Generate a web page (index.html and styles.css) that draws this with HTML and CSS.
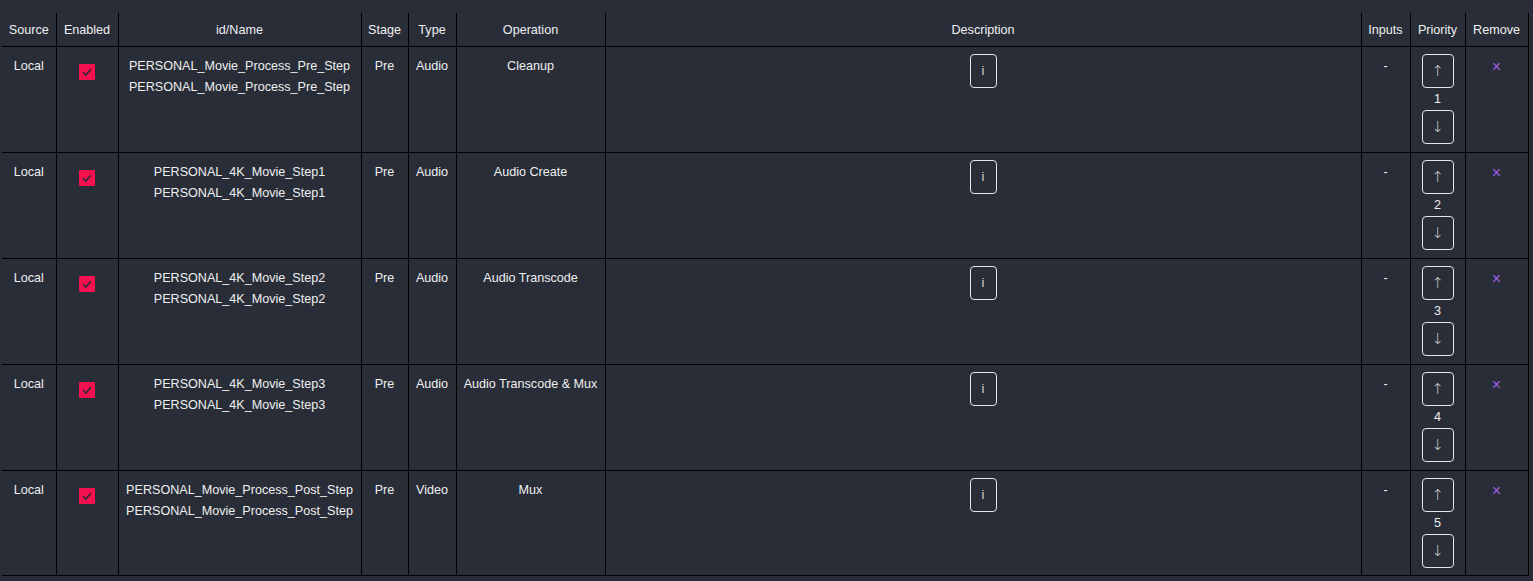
FILE: index.html
```html
<!DOCTYPE html>
<html>
<head>
<meta charset="utf-8">
<link rel="stylesheet" href="styles.css">
</head>
<body>
<div class="wrap">
<table class="grid">
<colgroup>
<col class="c-src"><col class="c-en"><col class="c-id"><col class="c-stage"><col class="c-type"><col class="c-op"><col class="c-desc"><col class="c-in"><col class="c-pri"><col class="c-rm">
</colgroup>
<thead>
<tr><th>Source</th><th>Enabled</th><th>id/Name</th><th>Stage</th><th>Type</th><th>Operation</th><th>Description</th><th>Inputs</th><th>Priority</th><th>Remove</th></tr>
</thead>
<tbody>
<tr>
<td class="t">Local</td>
<td><span class="chk"><svg width="16" height="16" viewBox="0 0 16 16"><path d="M4 8.2 L6.8 11 L12 5.2" fill="none" stroke="#2a2d38" stroke-width="1.6"/></svg></span></td>
<td class="t"><div class="ln">PERSONAL_Movie_Process_Pre_Step</div><div class="ln">PERSONAL_Movie_Process_Pre_Step</div></td>
<td class="t">Pre</td><td class="t">Audio</td><td class="t">Cleanup</td>
<td><button class="info">i</button></td>
<td class="t">-</td>
<td><button class="arr">↑</button><div class="num">1</div><button class="arr">↓</button></td>
<td><span class="rm">×</span></td>
</tr>
<tr>
<td class="t">Local</td>
<td><span class="chk"><svg width="16" height="16" viewBox="0 0 16 16"><path d="M4 8.2 L6.8 11 L12 5.2" fill="none" stroke="#2a2d38" stroke-width="1.6"/></svg></span></td>
<td class="t"><div class="ln">PERSONAL_4K_Movie_Step1</div><div class="ln">PERSONAL_4K_Movie_Step1</div></td>
<td class="t">Pre</td><td class="t">Audio</td><td class="t">Audio Create</td>
<td><button class="info">i</button></td>
<td class="t">-</td>
<td><button class="arr">↑</button><div class="num">2</div><button class="arr">↓</button></td>
<td><span class="rm">×</span></td>
</tr>
<tr>
<td class="t">Local</td>
<td><span class="chk"><svg width="16" height="16" viewBox="0 0 16 16"><path d="M4 8.2 L6.8 11 L12 5.2" fill="none" stroke="#2a2d38" stroke-width="1.6"/></svg></span></td>
<td class="t"><div class="ln">PERSONAL_4K_Movie_Step2</div><div class="ln">PERSONAL_4K_Movie_Step2</div></td>
<td class="t">Pre</td><td class="t">Audio</td><td class="t">Audio Transcode</td>
<td><button class="info">i</button></td>
<td class="t">-</td>
<td><button class="arr">↑</button><div class="num">3</div><button class="arr">↓</button></td>
<td><span class="rm">×</span></td>
</tr>
<tr>
<td class="t">Local</td>
<td><span class="chk"><svg width="16" height="16" viewBox="0 0 16 16"><path d="M4 8.2 L6.8 11 L12 5.2" fill="none" stroke="#2a2d38" stroke-width="1.6"/></svg></span></td>
<td class="t"><div class="ln">PERSONAL_4K_Movie_Step3</div><div class="ln">PERSONAL_4K_Movie_Step3</div></td>
<td class="t">Pre</td><td class="t">Audio</td><td class="t">Audio Transcode &amp; Mux</td>
<td><button class="info">i</button></td>
<td class="t">-</td>
<td><button class="arr">↑</button><div class="num">4</div><button class="arr">↓</button></td>
<td><span class="rm">×</span></td>
</tr>
<tr>
<td class="t">Local</td>
<td><span class="chk"><svg width="16" height="16" viewBox="0 0 16 16"><path d="M4 8.2 L6.8 11 L12 5.2" fill="none" stroke="#2a2d38" stroke-width="1.6"/></svg></span></td>
<td class="t"><div class="ln">PERSONAL_Movie_Process_Post_Step</div><div class="ln">PERSONAL_Movie_Process_Post_Step</div></td>
<td class="t">Pre</td><td class="t">Video</td><td class="t">Mux</td>
<td><button class="info">i</button></td>
<td class="t">-</td>
<td><button class="arr">↑</button><div class="num">5</div><button class="arr">↓</button></td>
<td><span class="rm">×</span></td>
</tr>
</tbody>
</table>
</div>
</body>
</html>
```
FILE: styles.css
```css
html, body {
  margin: 0;
  padding: 0;
  background: #282d38;
  height: 100%;
}
body {
  font-family: "Liberation Sans", Arial, sans-serif;
  font-size: 12.6px;
  color: #efefef;
}
.wrap {
  padding: 13px 0 0 2px;
}
.grid {
  border-collapse: collapse;
  table-layout: fixed;
  width: 1526px;
}
.c-src { width: 54px; }
.c-en { width: 62px; }
.c-id { width: 243px; }
.c-stage { width: 47px; }
.c-type { width: 48px; }
.c-op { width: 149px; }
.c-desc { width: 756px; }
.c-in { width: 49px; }
.c-pri { width: 55px; }
.c-rm { width: 63px; }
.grid th {
  font-weight: normal;
  height: 33px;
  padding: 0;
  border-right: 1px solid #000;
  border-bottom: 1px solid #000;
  text-align: center;
  vertical-align: middle;
  line-height: 16px;
}
.grid td {
  height: 91px;
  padding: 7px 0 7px 0;
  border-right: 1px solid #000;
  border-bottom: 1px solid #000;
  text-align: center;
  vertical-align: top;
  line-height: 21px;
}
.grid tbody tr:last-child td {
  height: 90px;
}
.grid td.t {
  padding-top: 9px;
  padding-bottom: 5px;
}
.ln {
  line-height: 21px;
}
.chk {
  display: inline-block;
  width: 16px;
  height: 16px;
  margin-top: 10px;
  background: #f5104f;
  border-radius: 1px;
  vertical-align: top;
}
.chk svg { display: block; }
.info, .arr {
  display: inline-block;
  background: transparent;
  border: 1px solid #e6e6e6;
  border-radius: 4px;
  color: #d8d8d8;
  font-family: "Liberation Sans", Arial, sans-serif;
  font-size: 12.6px;
  padding: 0;
  margin: 0;
  vertical-align: top;
  height: 34px;
}
.info { width: 27px; }
.arr {
  width: 32px;
  font-size: 15px;
  line-height: 30px;
  font-family: "DejaVu Sans", sans-serif;
  font-weight: 300;
  color: #cfcfcf;
}
.num {
  line-height: 22px;
  height: 22px;
}
.rm {
  display: inline-block;
  color: #9d5fe0;
  font-size: 16px;
  line-height: 20px;
  margin-top: 3px;
}
```
